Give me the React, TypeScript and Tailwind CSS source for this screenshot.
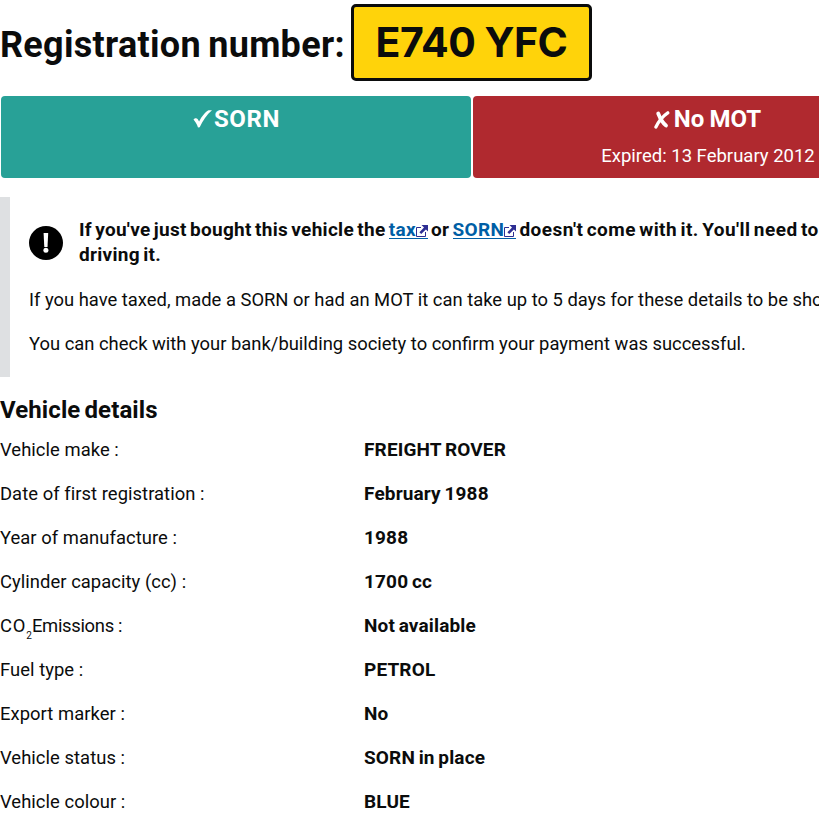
const details = [
  { label: "Vehicle make :", value: "FREIGHT ROVER" },
  { label: "Date of first registration :", value: "February 1988" },
  { label: "Year of manufacture :", value: "1988" },
  { label: "Cylinder capacity (cc) :", value: "1700 cc" },
  { label: "co2", value: "Not available" },
  { label: "Fuel type :", value: "PETROL" },
  { label: "Export marker :", value: "No" },
  { label: "Vehicle status :", value: "SORN in place" },
  { label: "Vehicle colour :", value: "BLUE" },
];

function ExternalIcon() {
  return (
    <svg className="inline-block h-3 w-3 align-[-1px]" viewBox="0 0 12 12" fill="none">
      <path d="M5 2.500H.5v9h9V7" stroke="#2e2e93" />
      <path d="M5.500 0H12v6.500L9.900 4.400 5.200 9.100 3.400 7.300 8 2.500Z" fill="#2e2e93" />
    </svg>
  );
}

function ExternalLink({ children }: { children: string }) {
  return (
    <a href="#" className="inline-block h-[22px] border-b border-[#005ea5] leading-[25px] text-[#005ea5]">
      {children}
      <ExternalIcon />
    </a>
  );
}

function TickIcon() {
  return (
    <svg className="h-[18px] w-[19px]" viewBox="0 0 19 18" fill="#fff">
      <path d="M.5 9.600C1.600 8.300 3.400 7.800 4.600 9l1.500 2.600C8.700 6.500 12.200 2 15.500.3L19 .2C13.800 4.600 9.700 10.500 6.700 17.200L5 17.400C3.900 14.300 2.300 11.600.5 9.600Z" />
    </svg>
  );
}

function CrossIcon() {
  return (
    <svg className="mt-0.5 h-[18px] w-[16px]" viewBox="0 0 16 18" fill="none" stroke="#fff" strokeLinecap="round">
      <path d="M13.800 1.800C9 5 5 9.500 1.900 16" strokeWidth="3.200" />
      <path d="M4.200 2.500C6 7 8 11.500 12 14.500" strokeWidth="3.800" />
    </svg>
  );
}

function StatusPanels() {
  return (
    <div className="ml-px mt-[15px] flex gap-0.5 text-white">
      <div className="h-[82px] w-[470px] shrink-0 rounded bg-[#28a197] pt-2">
        <h2 className="flex h-[30px] items-center justify-center gap-0.5 pl-px text-2xl font-bold">
          <TickIcon />
          <span className="tracking-[0.6px]">SORN</span>
        </h2>
      </div>
      <div className="h-[82px] w-[470px] shrink-0 rounded bg-[#b0292f] pt-2">
        <h2 className="flex h-[30px] items-center justify-center gap-1 pr-px text-2xl font-bold">
          <CrossIcon />
          <span className="tracking-[0.1px] [word-spacing:-1px]">No MOT</span>
        </h2>
        <p className="mt-[10px] text-center text-[18.5px] leading-[25px]">Expired: 13 February 2012</p>
      </div>
    </div>
  );
}

function Notice() {
  return (
    <div className="mt-[19px] h-[180px] w-[943px] border-l-10 border-[#dee0e2] pl-[19px] pt-5">
      <div className="flex">
        <svg className="mt-[9px] h-[34px] w-[34px] shrink-0" viewBox="0 0 34 34">
          <circle cx="17" cy="17" r="17" fill="#000" />
          <path d="M14.600 7h4.600l-.7 14h-3.200Z" fill="#fff" />
          <circle cx="16.900" cy="24.200" r="2.500" fill="#fff" />
        </svg>
        <p className="ml-4 whitespace-nowrap text-[19px] font-bold leading-[25px] tracking-[0.3px] [word-spacing:-1.8px]">
          If you've just bought this vehicle the <ExternalLink>tax</ExternalLink> or{" "}
          <ExternalLink>SORN</ExternalLink>{" "}
          <span className="tracking-[0.45px]">doesn't come with it. You'll need to</span>
          <br />
          driving it.
        </p>
      </div>
      <p className="mt-5 whitespace-nowrap text-[18.4px] leading-[25px]">
        If you have taxed, made a SORN or had an MOT it can take up to 5 days for these details to be shown.
      </p>
      <p className="mt-[19px] whitespace-nowrap text-[18.4px] leading-[25px]">
        You can check with your bank/building society to confirm your payment was successful.
      </p>
    </div>
  );
}

export default function App() {
  return (
    <main className="h-[818px] w-full overflow-hidden bg-white font-['Roboto',sans-serif] text-[#0b0c0c]">
      <h1 className="flex h-[81px] items-start whitespace-nowrap pt-1 text-4xl font-bold">
        <span className="w-[351px] shrink-0 pt-[21px] tracking-[0.3px] [word-spacing:-2px]">Registration number:</span>
        <span className="flex h-[77px] w-[241px] shrink-0 items-center justify-center rounded-[5px] border-3 border-[#0b0c0c] bg-[#ffd30a] font-['Inter',sans-serif] text-[41px] leading-none tracking-[-0.5px]">
          E740 YFC
        </span>
      </h1>
      <StatusPanels />
      <Notice />
      <h2 className="mt-[18px] text-2xl font-bold leading-[30px] tracking-[0.1px] [word-spacing:-2px]">
        Vehicle details
      </h2>
      <dl className="mt-[3px]">
        {details.map((d) => (
          <div key={d.label} className="flex h-11 items-start pt-[9px] leading-[25px]">
            <dt className="w-[364px] text-[18.4px] tracking-[0.05px]">
              {d.label === "co2" ? (
                <>
                  <span className="tracking-[0.8px]">CO</span>
                  <sub className="bottom-[-7px] text-[10px] leading-none">2</sub>
                  <span className="tracking-[-0.3px]">Emissions :</span>
                </>
              ) : (
                d.label
              )}
            </dt>
            <dd className="text-[19px] font-bold tracking-[0.15px] [word-spacing:-1.2px]">{d.value}</dd>
          </div>
        ))}
      </dl>
    </main>
  );
}
